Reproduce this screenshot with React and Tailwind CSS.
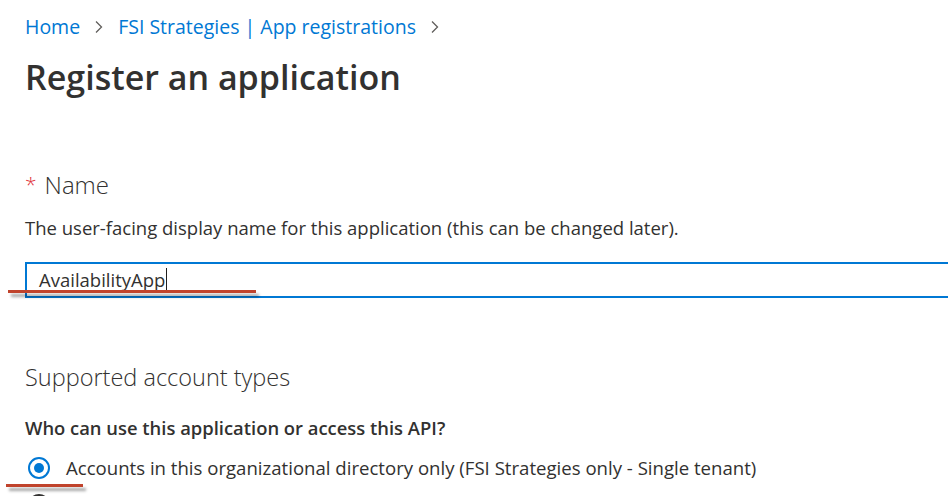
import React from 'react';

function Chevron() {
  return (
    <svg width="10" height="14" viewBox="0 0 10 14" className="mx-[14px]">
      <path d="M2 1.5 L7.5 7 L2 12.5" fill="none" stroke="#605e5c" strokeWidth="1.3" />
    </svg>
  );
}

function Annotation({ className }) {
  return (
    <div className={`absolute h-[3px] bg-[#c0432c] shadow-[3px_4px_3px_rgba(0,0,0,0.35)] ${className}`}></div>
  );
}

export default function App() {
  return (
    <div className="relative h-[496px] w-[948px] overflow-hidden bg-white text-[#323130]" style={{ fontFamily: '"Open Sans", "Noto Sans", sans-serif' }}>
      <div className="pl-[25px] pt-[12px]">
        {/* Breadcrumb */}
        <div className="flex items-center h-[30px] text-[19.5px] text-[#0078d4]">
          <span>Home</span>
          <Chevron />
          <span>FSI Strategies | App registrations</span>
          <Chevron />
        </div>

        {/* Title */}
        <h1 className="mt-[13px] text-[34px] font-semibold leading-[44px] text-[#323130]">Register an application</h1>

        {/* Name */}
        <div className="mt-[71px] flex items-center h-[30px] text-[24px] font-light">
          <span className="text-[#e0333a] mr-[8px] text-[21px]">*</span>
          <span>Name</span>
        </div>
        <p className="mt-[15px] text-[18.5px] leading-[26px]">The user-facing display name for this application (this can be changed later).</p>

        <div className="mt-[21px] flex items-center h-[36px] w-[960px] border-2 border-[#0078d4] pl-[12px] text-[18.5px]">
          <span>AvailabilityApp</span>
          <span className="ml-[1px] h-[24px] w-px bg-[#201f1e]"></span>
        </div>

        {/* Supported account types */}
        <h2 className="mt-[63px] text-[23.5px] font-light leading-[32px]">Supported account types</h2>
        <p className="mt-[22px] text-[18.4px] font-semibold leading-[26px]">Who can use this application or access this API?</p>

        <div className="mt-[14px] flex items-center h-[26px]">
          <span className="flex items-center justify-center w-[22px] h-[22px] rounded-full border-2 border-[#0078d4] ml-[3px]">
            <span className="w-[10px] h-[10px] rounded-full bg-[#0078d4]"></span>
          </span>
          <span className="ml-[16px] text-[18.6px]">Accounts in this organizational directory only (FSI Strategies only - Single tenant)</span>
        </div>
        <div className="mt-[11px] flex items-center h-[26px]">
          <span className="w-[22px] h-[22px] rounded-full border-2 border-[#323130] ml-[3px]"></span>
          <span className="ml-[16px] text-[18.6px]">Accounts in any organizational directory (Any Azure AD directory - Multitenant)</span>
        </div>
      </div>

      <Annotation className="left-[8px] top-[290px] w-[248px]" />
      <Annotation className="left-[6px] top-[484px] w-[77px]" />
    </div>
  );
}
